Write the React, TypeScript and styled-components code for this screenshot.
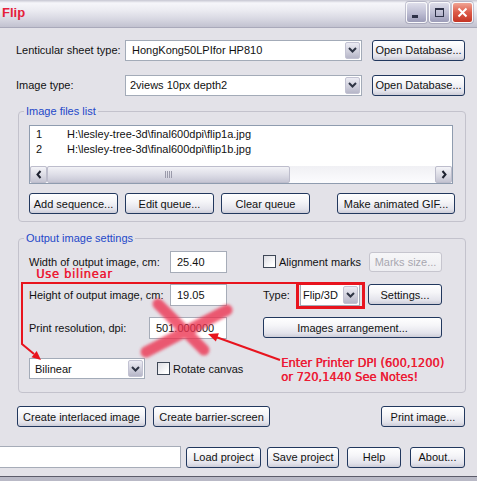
import React from "react";
import styled, { createGlobalStyle, css } from "styled-components";

const GlobalStyle = createGlobalStyle`
  *, *::before, *::after { box-sizing: border-box; }
  html, body { margin: 0; padding: 0; }
  body {
    background: #E3E2E8;
    font-family: "Liberation Sans", Arial, sans-serif;
    font-size: 11px;
    color: #111;
  }
`;

const Window = styled.div`
  position: relative;
  width: 477px;
  height: 481px;
  overflow: hidden;
  display: flex;
  flex-direction: column;
  background: #E3E2E8;
`;

const TitleBar = styled.div`
  flex: none;
  height: 28px;
  display: flex;
  align-items: center;
  padding: 0 4px 0 2px;
  border-bottom: 1px solid #A9A9BA;
  background: linear-gradient(
    to bottom,
    #C6C6D2 0px,
    #F6F6FA 3px,
    #ECECF2 10px,
    #DADAE4 18px,
    #C2C2D0 27px
  );
`;

const Title = styled.span`
  font-weight: bold;
  font-size: 13px;
  color: #E5203A;
  margin-top: -2px;
`;

const CaptionButtons = styled.div`
  margin-left: auto;
  display: flex;
  gap: 2px;
  margin-top: -2px;
`;

const CaptionButton = styled.div<{ $close?: boolean }>`
  width: 21px;
  height: 21px;
  border-radius: 3px;
  border: 1px solid #FAFAFC;
  display: flex;
  align-items: center;
  justify-content: center;
  box-shadow: 0 0 0 1px rgba(110, 110, 140, 0.35);
  background: ${(p) =>
    p.$close
      ? "linear-gradient(to bottom, #F0A494, #DC5A48 50%, #C43424)"
      : "linear-gradient(to bottom, #DEDEEA, #BCBCD2 55%, #9C9CB8)"};
`;

const Client = styled.div`
  flex: 1;
  display: flex;
  flex-direction: column;
  padding: 11px 12px 0 16px;
`;

const BottomFrame = styled.div`
  flex: none;
  height: 5px;
  border-top: 1px solid #5C5C6A;
  background: #B9B9C6;
`;

const FormRow = styled.div<{ $mt?: number }>`
  display: flex;
  align-items: center;
  height: 22px;
  margin-top: ${(p) => p.$mt ?? 0}px;
`;

const Label = styled.span<{ $w?: number; $ml?: number }>`
  flex: none;
  white-space: nowrap;
  width: ${(p) => (p.$w ? `${p.$w}px` : "auto")};
  margin-left: ${(p) => p.$ml ?? 0}px;
`;

const ComboBox = styled.div<{ $w: number; $h?: number; $pl?: number }>`
  flex: none;
  width: ${(p) => p.$w}px;
  height: ${(p) => p.$h ?? 21}px;
  display: flex;
  align-items: center;
  background: #fff;
  border: 1px solid #A3ABB8;
  padding: 1px 1px 1px ${(p) => p.$pl ?? 5}px;
`;

const ComboText = styled.span`
  flex: 1;
  white-space: nowrap;
  overflow: hidden;
`;

const DropButton = styled.span`
  flex: none;
  width: 15px;
  align-self: stretch;
  display: flex;
  align-items: center;
  justify-content: center;
  border: 1px solid #C2C2D2;
  border-radius: 2px;
  background: linear-gradient(to bottom, #ECECF4, #CDCDDA 60%, #B6B6C8);
`;

const Button = styled.button<{ $w: number; $h?: number; $ml?: number; $auto?: boolean; $disabled?: boolean }>`
  flex: none;
  width: ${(p) => p.$w}px;
  height: ${(p) => p.$h ?? 21}px;
  margin: 0 0 0 ${(p) => (p.$auto ? "auto" : `${p.$ml ?? 0}px`)};
  padding: 0;
  font-family: inherit;
  font-size: 11px;
  color: #111;
  white-space: nowrap;
  border: 1px solid #22385E;
  border-radius: 3px;
  background: linear-gradient(to bottom, #FFFFFF 0%, #F5F5F8 40%, #E3E3EB 80%, #CDCDD8 100%);
  ${(p) =>
    p.$disabled &&
    css`
      color: #A8A7B0;
      border-color: #C6C5CE;
      background: linear-gradient(to bottom, #F6F6F8, #EDEDF1);
    `}
`;

const TextField = styled.input<{ $w: number; $ml?: number }>`
  flex: none;
  width: ${(p) => p.$w}px;
  height: 22px;
  margin: 0 0 0 ${(p) => p.$ml ?? 0}px;
  padding: 0 0 0 6px;
  font-family: inherit;
  font-size: 11px;
  color: #111;
  background: #fff;
  border: 1px solid #A6ACB8;
  outline: none;
`;

const Check = styled.span<{ $ml?: number }>`
  flex: none;
  width: 13px;
  height: 13px;
  margin-left: ${(p) => p.$ml ?? 0}px;
  border: 1px solid #3E4756;
  background: linear-gradient(135deg, #DCDCE2, #FFFFFF 80%);
`;

const Group = styled.fieldset<{ $pt: number; $pb: number; $mt: number }>`
  margin: ${(p) => p.$mt}px 0 0 2px;
  width: 448px;
  min-width: 0;
  padding: ${(p) => p.$pt}px 10px ${(p) => p.$pb}px 10px;
  border: 1px solid #C3C2CC;
  border-radius: 4px;
`;

const Legend = styled.legend`
  padding: 0 2px;
  margin-left: -5px;
  color: #2448C8;
  font-size: 11px;
  line-height: 13px;
`;

const ListBox = styled.div`
  width: 424px;
  height: 59px;
  background: #fff;
  border: 1px solid #8F9CAF;
  display: flex;
  flex-direction: column;
`;

const ListItems = styled.div`
  flex: 1;
  padding-top: 1px;
`;

const ListItem = styled.div`
  display: flex;
  height: 15px;
  line-height: 15px;
  padding-left: 6px;
  white-space: nowrap;
`;

const ItemIndex = styled.span`
  width: 31px;
`;

const ScrollBar = styled.div`
  flex: none;
  height: 17px;
  display: flex;
  background: linear-gradient(to bottom, #F0F0F4, #FCFCFE);
`;

const ScrollArrow = styled.span`
  flex: none;
  width: 17px;
  height: 17px;
  display: flex;
  align-items: center;
  justify-content: center;
  border: 1px solid #BDBDCC;
  border-radius: 2px;
  background: linear-gradient(to bottom, #F4F4F8, #D8D8E2 60%, #C4C4D2);
`;

const ScrollTrack = styled.div`
  flex: 1;
  display: flex;
`;

const ScrollThumb = styled.span<{ $w: number }>`
  flex: none;
  width: ${(p) => p.$w}px;
  height: 17px;
  display: flex;
  align-items: center;
  justify-content: center;
  border: 1px solid #BDBDCC;
  border-radius: 2px;
  background: linear-gradient(to bottom, #F2F2F6, #DCDCE6 55%, #C6C6D4);
`;

const Grip = styled.span`
  width: 7px;
  height: 7px;
  background: repeating-linear-gradient(to right, #9A9AAA 0 1px, transparent 1px 2px);
`;

const ButtonRow = styled.div<{ $mt: number; $ml?: number }>`
  display: flex;
  align-items: center;
  gap: 7px;
  margin-top: ${(p) => p.$mt}px;
  margin-left: ${(p) => p.$ml ?? 0}px;
`;

const SettingsGrid = styled.div`
  display: grid;
  grid-template-columns: 198px 179px;
  grid-auto-rows: 23px;
  column-gap: 36px;
  row-gap: 10px;
`;

const Cell = styled.div`
  display: flex;
  align-items: center;
  justify-content: space-between;
`;

const RightCell = styled.div`
  display: flex;
  align-items: center;
`;

const SettingsBottomRow = styled.div`
  display: flex;
  align-items: center;
  height: 21px;
  margin-top: 19px;
`;

const ProjectRow = styled.div`
  display: flex;
  align-items: center;
  height: 22px;
  margin-top: 19px;
`;

const Overlay = styled.svg`
  position: absolute;
  top: 0;
  left: 0;
  pointer-events: none;
`;

const RedNote = styled.div<{ $x: number; $y: number; $ls?: number }>`
  position: absolute;
  left: ${(p) => p.$x}px;
  top: ${(p) => p.$y}px;
  font-family: "DejaVu Sans", sans-serif;
  font-size: 11.5px;
  line-height: 14px;
  letter-spacing: ${(p) => p.$ls ?? 0}px;
  color: #EC1A34;
  text-shadow: 0.4px 0 0 #EC1A34;
  white-space: nowrap;
`;

const Chevron = () => (
  <svg width="9" height="6" viewBox="0 0 9 6">
    <path d="M1 1 L4.5 4.5 L8 1" fill="none" stroke="#2E3444" strokeWidth="2" />
  </svg>
);

const Combo = ({ w, h, pl, text }: { w: number; h?: number; pl?: number; text: string }) => (
  <ComboBox $w={w} $h={h} $pl={pl}>
    <ComboText>{text}</ComboText>
    <DropButton>
      <Chevron />
    </DropButton>
  </ComboBox>
);

const files = [
  "H:\\lesley-tree-3d\\final600dpi\\flip1a.jpg",
  "H:\\lesley-tree-3d\\final600dpi\\flip1b.jpg",
];

export default function App() {
  return (
    <>
      <GlobalStyle />
      <Window>
        <TitleBar>
          <Title>Flip</Title>
          <CaptionButtons>
            <CaptionButton>
              <svg width="13" height="13" viewBox="0 0 13 13">
                <rect x="2" y="9" width="6" height="3" fill="#2E3248" />
              </svg>
            </CaptionButton>
            <CaptionButton>
              <svg width="13" height="13" viewBox="0 0 13 13">
                <rect x="2.5" y="2.5" width="8" height="8" fill="none" stroke="#2E3248" strokeWidth="1" />
                <rect x="2" y="2" width="9" height="2" fill="#2E3248" />
              </svg>
            </CaptionButton>
            <CaptionButton $close>
              <svg width="13" height="13" viewBox="0 0 13 13">
                <path d="M2.5 2.5 L10.5 10.5 M10.5 2.5 L2.5 10.5" stroke="#fff" strokeWidth="2" />
              </svg>
            </CaptionButton>
          </CaptionButtons>
        </TitleBar>

        <Client>
          <FormRow>
            <Label $w={109}>Lenticular sheet type:</Label>
            <Combo w={237} text="HongKong50LPIfor HP810" pl={6} />
            <Button $w={93} $ml={10}>Open Database...</Button>
          </FormRow>
          <FormRow $mt={13}>
            <Label $w={109}>Image type:</Label>
            <Combo w={237} text="2views 10px depth2" pl={4} />
            <Button $w={93} $ml={10}>Open Database...</Button>
          </FormRow>

          <Group $mt={9} $pt={7} $pb={7}>
            <Legend>Image files list</Legend>
            <ListBox>
              <ListItems>
                {files.map((f, i) => (
                  <ListItem key={f}>
                    <ItemIndex>{i + 1}</ItemIndex>
                    <span>{f}</span>
                  </ListItem>
                ))}
              </ListItems>
              <ScrollBar>
                <ScrollArrow>
                  <svg width="6" height="9" viewBox="0 0 6 9">
                    <path d="M4.5 1 L1.5 4.5 L4.5 8" fill="none" stroke="#1E2230" strokeWidth="2" />
                  </svg>
                </ScrollArrow>
                <ScrollTrack>
                  <ScrollThumb $w={243}>
                    <Grip />
                  </ScrollThumb>
                </ScrollTrack>
                <ScrollArrow>
                  <svg width="6" height="9" viewBox="0 0 6 9">
                    <path d="M1.5 1 L4.5 4.5 L1.5 8" fill="none" stroke="#1E2230" strokeWidth="2" />
                  </svg>
                </ScrollArrow>
              </ScrollBar>
            </ListBox>
            <ButtonRow $mt={9}>
              <Button $w={89}>Add sequence...</Button>
              <Button $w={89}>Edit queue...</Button>
              <Button $w={89}>Clear queue</Button>
              <Button $w={118} $auto>Make animated GIF...</Button>
            </ButtonRow>
          </Group>

          <Group $mt={10} $pt={5} $pb={13}>
            <Legend>Output image settings</Legend>
            <SettingsGrid>
              <Cell>
                <Label>Width of output image, cm:</Label>
                <TextField $w={57} readOnly defaultValue="25.40" />
              </Cell>
              <RightCell>
                <Check />
                <Label $ml={3}>Alignment marks</Label>
                <Button $w={73} $h={20} $auto $disabled>Marks size...</Button>
              </RightCell>
              <Cell>
                <Label>Height of output image, cm:</Label>
                <TextField $w={57} readOnly defaultValue="19.05" />
              </Cell>
              <RightCell>
                <Label $w={37}>Type:</Label>
                <Combo w={60} h={22} pl={2} text="Flip/3D" />
                <Button $w={74} $auto>Settings...</Button>
              </RightCell>
              <Cell>
                <Label>Print resolution, dpi:</Label>
                <TextField $w={78} readOnly defaultValue="501.000000" />
              </Cell>
              <RightCell>
                <Button $w={179}>Images arrangement...</Button>
              </RightCell>
            </SettingsGrid>
            <SettingsBottomRow>
              <Combo w={116} pl={5} text="Bilinear" />
              <Check $ml={12} />
              <Label $ml={3}>Rotate canvas</Label>
            </SettingsBottomRow>
          </Group>

          <ButtonRow $mt={13} $ml={1}>
            <Button $w={129}>Create interlaced image</Button>
            <Button $w={117}>Create barrier-screen</Button>
            <Button $w={84} $auto>Print image...</Button>
          </ButtonRow>

          <ProjectRow>
            <TextField $w={183} $ml={-18} readOnly defaultValue="" />
            <Button $w={75} $ml={5}>Load project</Button>
            <Button $w={72} $ml={6}>Save project</Button>
            <Button $w={54} $ml={8}>Help</Button>
            <Button $w={55} $ml={9}>About...</Button>
          </ProjectRow>
        </Client>
        <BottomFrame />

        <Overlay width="477" height="481" viewBox="0 0 477 481">
          <defs>
            <filter id="soft" x="-30%" y="-30%" width="160%" height="160%">
              <feGaussianBlur stdDeviation="1.8" />
            </filter>
          </defs>
          <g fill="none" stroke="#E8141E">
            <rect x="297.5" y="283.5" width="66" height="24" strokeWidth="3" />
            <polyline points="296,283 22,283 22,344 34,354" strokeWidth="2" />
            <line x1="280" y1="360" x2="216" y2="337" strokeWidth="2" />
          </g>
          <polygon fill="#E8141E" points="41,360 31.5,357.3 36.7,351.1" />
          <polygon fill="#E8141E" points="208,334 218.9,333.2 215.9,341.6" />
          <g filter="url(#soft)" stroke="#EC3350" strokeWidth="11" strokeLinecap="round" opacity="0.78">
            <line x1="158" y1="304" x2="204" y2="350" />
            <line x1="227" y1="310" x2="146" y2="352" />
          </g>
        </Overlay>
        <RedNote $x={36} $y={267} $ls={0.7}>Use bilinear</RedNote>
        <RedNote $x={281} $y={356}>
          Enter Printer DPI (600,1200)
          <br />
          or 720,1440 See Notes!
        </RedNote>
      </Window>
    </>
  );
}
